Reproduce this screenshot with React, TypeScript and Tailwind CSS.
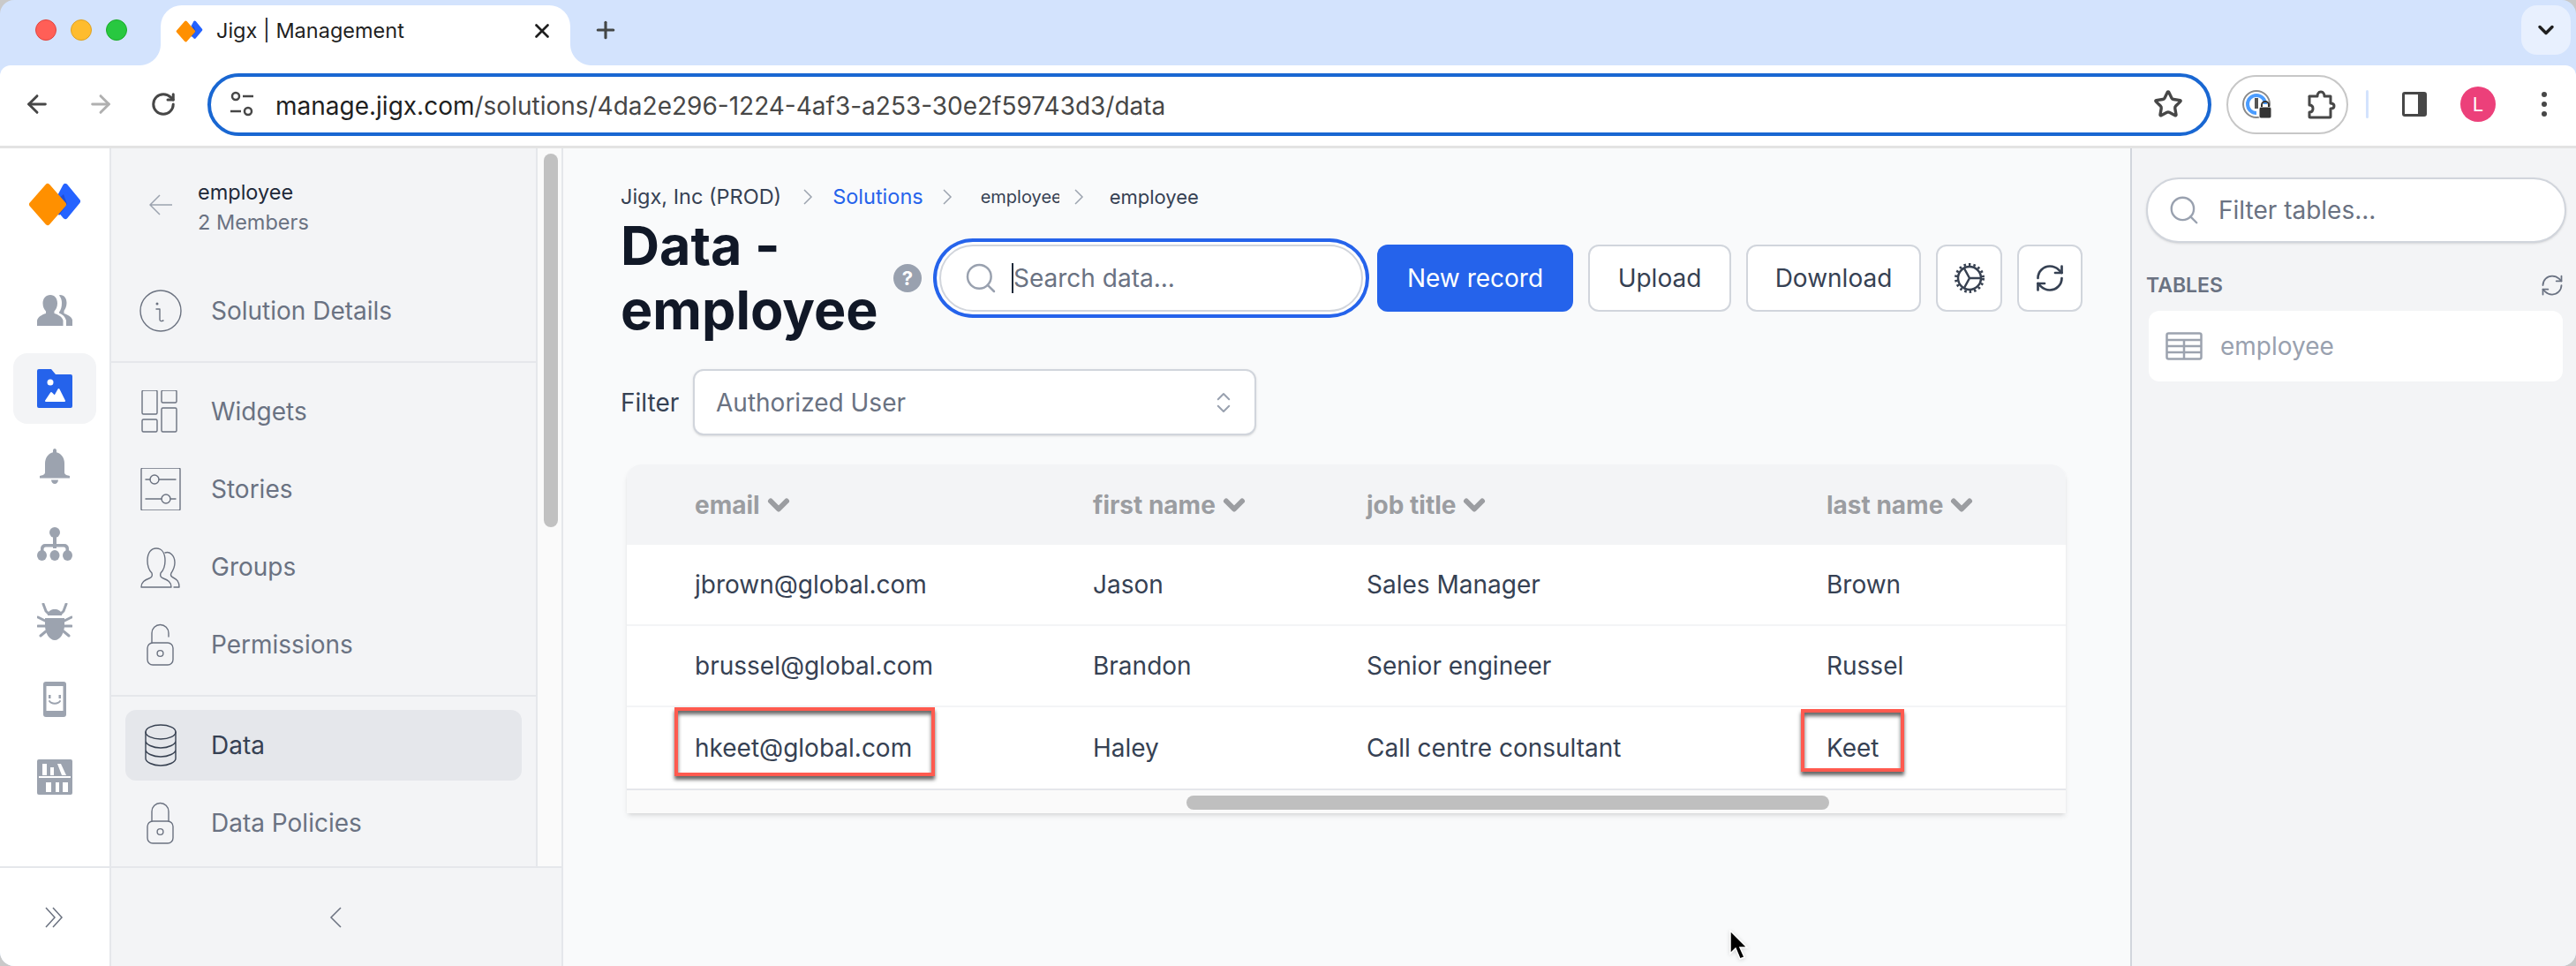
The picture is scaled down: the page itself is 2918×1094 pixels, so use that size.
import React from 'react';
import { ArrowLeft, ArrowRight, RotateCw, Star, Plus, X, ChevronDown, Search, RefreshCw, ChevronsUpDown } from 'lucide-react';

const NavIcon: React.FC<{ children: React.ReactNode; dark?: boolean }> = ({ children, dark }) => (
    <svg width="48" height="48" viewBox="0 0 48 48" fill="none" stroke={dark ? '#374151' : '#6b7280'} strokeWidth="1.4" strokeLinecap="round" strokeLinejoin="round">
        {children}
    </svg>
);

const lockOpen = (
    <>
        <rect x="9" y="22" width="29" height="25" rx="6" />
        <circle cx="23.5" cy="34" r="3.4" />
        <path d="M14 22V11a9.5 9.5 0 0 1 19 0v4" />
    </>
);
const lockClosed = (
    <>
        <rect x="9" y="22" width="29" height="25" rx="6" />
        <circle cx="23.5" cy="34" r="3.4" />
        <path d="M14 22V11a9.5 9.5 0 0 1 19 0v11" />
    </>
);

const railIcons = [
    <svg key="people" width="40" height="36" viewBox="0 0 40 36" fill="#9ca3af">
        <path d="M15 0c5 0 8 4 8 9.500 0 4-1.500 7-3.500 9v2.500c5 1.500 9 4 10 8V35H0v-6c1-4 5-6.500 10-8v-2.500C8 16.500 6.500 13.500 6.500 9.500 6.500 4 10 0 15 0z" />
        <path d="M26 0c5 0 7.500 4 7.500 9 0 4-1.500 7-3 9v3c4 1.500 8.500 3.500 9.500 7.500V35h-7v-6c-1-4-4-7-8-8.500v-1c2-2.500 3-6 3-10.500 0-3-1-6-3-8.500C25 .200 25.500 0 26 0z" />
    </svg>,
    <svg key="folder" width="40" height="44" viewBox="0 0 40 44" fill="#2563eb">
        <path d="M2 0h14l5 6h17a2 2 0 0 1 2 2v34a2 2 0 0 1-2 2H2a2 2 0 0 1-2-2V2a2 2 0 0 1 2-2z" />
        <circle cx="15" cy="15" r="3.500" fill="#fff" />
        <path d="M10 36l6-9 4 4 4.500-8 6.500 13z" fill="#fff" stroke="#fff" strokeWidth="2" strokeLinejoin="round" />
    </svg>,
    <svg key="bell" width="34" height="40" viewBox="0 0 34 40" fill="#9ca3af">
        <path d="M17 0c1.200 0 2 1 2 2.500v1.800C25 6 28 11 28 17v10c0 1.500 1 3 6 4v2.500H0V31c5-1 6-2.500 6-4V17c0-6 3-11 9-12.700V2.500C15 1 15.800 0 17 0z" />
        <path d="M13 35.500h8c0 2.500-2 4.500-4 4.500s-4-2-4-4.500z" />
    </svg>,
    <svg key="tree" width="40" height="38" viewBox="0 0 40 38" fill="#9ca3af">
        <circle cx="20" cy="6" r="6" />
        <rect x="18" y="10" width="4" height="14" />
        <path d="M4 30v-6a5 5 0 0 1 5-5h22a5 5 0 0 1 5 5v6h-3.500v-5a2.500 2.500 0 0 0-2.500-2.500H10A2.500 2.500 0 0 0 7.500 25v5z" />
        <ellipse cx="5.500" cy="32" rx="5.500" ry="6" />
        <ellipse cx="20" cy="32" rx="5.500" ry="6" />
        <ellipse cx="34.500" cy="32" rx="5.500" ry="6" />
    </svg>,
    <svg key="bug" width="40" height="42" viewBox="0 0 40 42" fill="#9ca3af">
        <path d="M12 12c1-3 4-5 8-5s7 2 8 5v2H12z" />
        <path d="M9 17h22v8c0 9-5 17-11 17S9 34 9 25z" />
        <path d="M7 1l3 8 3 3M33 1l-3 8-3 3M1 16l8 4M39 16l-8 4M1 26h8M39 26h-8M4 37l6-5M36 37l-6-5" fill="none" stroke="#9ca3af" strokeWidth="3" strokeLinecap="round" />
    </svg>,
    <svg key="phone" width="26" height="40" viewBox="0 0 26 40" fill="#9ca3af">
        <rect width="26" height="40" rx="3" />
        <rect x="3.500" y="5" width="19" height="28" fill="#fff" />
        <rect x="6" y="15" width="2.500" height="4" />
        <rect x="17.500" y="15" width="2.500" height="4" />
        <path d="M7 22c2 3.500 10 3.500 12 0" fill="none" stroke="#9ca3af" strokeWidth="2" strokeLinecap="round" />
    </svg>,
    <svg key="library" width="40" height="40" viewBox="0 0 40 40" fill="#9ca3af">
        <rect width="40" height="40" rx="2" />
        <g fill="#fff">
            <rect x="6" y="5" width="5" height="13" />
            <rect x="15" y="9" width="4" height="9" />
            <path d="M23 5h4l6 13h-5z" />
            <rect x="2" y="19" width="36" height="2" />
            <rect x="10" y="26" width="6" height="11" />
            <rect x="21" y="26" width="4" height="11" />
            <rect x="29" y="26" width="6" height="11" />
        </g>
    </svg>,
];

const LogoMark: React.FC<{ w: number; h: number }> = ({ w, h }) => (
    <svg width={w} height={h} viewBox="0 0 58 49">
        <path d="M41 4L55 21 41 38 30 25z" fill="#2563ff" stroke="#2563ff" strokeWidth="6" strokeLinejoin="round" />
        <path d="M39 13l4 11-9 13-8-13z" fill="#1d4ed8" />
        <path d="M21 4L39 24.500 21 45 3 24.500z" fill="#ff9000" stroke="#ff9000" strokeWidth="6" strokeLinejoin="round" />
    </svg>
);

const NavRow: React.FC<{ label: string; icon: React.ReactNode; active?: boolean }> = ({ label, icon, active }) => (
    <div className={`flex h-20 items-center rounded-xl pl-4 ${active ? 'bg-gray-200 text-gray-700' : 'text-gray-500'}`}>
        <span className="flex w-12 shrink-0 justify-center">{icon}</span>
        <span className="ml-[33px] text-[28px]">{label}</span>
    </div>
);

const Crumb = () => (
    <svg width="12" height="20" viewBox="0 0 12 20" fill="none" stroke="#9ca3af" strokeWidth="1.500" className="shrink-0"><path d="M2 2l8 8-8 8" /></svg>
);

const rows = [
    ['jbrown@global.com', 'Jason', 'Sales Manager', 'Brown'],
    ['brussel@global.com', 'Brandon', 'Senior engineer', 'Russel'],
    ['hkeet@global.com', 'Haley', 'Call centre consultant', 'Keet'],
];

const markShadow = 'shadow-[0_4px_4px_rgba(0,0,0,0.6),inset_0_4px_4px_rgba(0,0,0,0.6)]';

export default function App() {
    return (
        <div className="h-[1094px] w-[2918px] overflow-hidden bg-[#c9c9c9] font-[family-name:Inter,sans-serif]">
            <div className="flex h-full flex-col overflow-hidden rounded-[16px] bg-[#d3e3fd]">
                {/* tab strip */}
                <div className="flex h-[74px] shrink-0 items-start">
                    <div className="ml-10 mt-[22px] flex gap-4">
                        <span className="h-6 w-6 rounded-full border border-[#e0443e] bg-[#ff5f57]" />
                        <span className="h-6 w-6 rounded-full border border-[#dea123] bg-[#febc2e]" />
                        <span className="h-6 w-6 rounded-full border border-[#1aab29] bg-[#28c840]" />
                    </div>
                    <div className="relative ml-[38px] mt-1.5 flex h-[68px] w-[464px] items-center rounded-t-[24px] bg-white pb-2.5 pl-[17px]">
                        <span className="absolute -left-6 bottom-0 h-6 w-6 bg-[radial-gradient(circle_at_0_0,transparent_23.500px,white_24.500px)]" />
                        <span className="absolute -right-6 bottom-0 h-6 w-6 bg-[radial-gradient(circle_at_100%_0,transparent_23.500px,white_24.500px)]" />
                        <LogoMark w={31} h={25} />
                        <span className="ml-[15px] text-[23.500px] text-[#1f1f1f]">Jigx | Management</span>
                        <X size={26} strokeWidth={2.500} className="ml-auto mr-[19px] text-[#1f1f1f]" />
                    </div>
                    <Plus size={30} strokeWidth={2.500} className="ml-[25px] mt-[19px] text-[#444746]" />
                    <div className="ml-auto mr-1.5 mt-1.5 flex h-14 w-14 items-center justify-center rounded-[18px] bg-[#e8f0fe]">
                        <ChevronDown size={28} strokeWidth={3} className="text-[#1f1f1f]" />
                    </div>
                </div>

                {/* toolbar */}
                <div className="flex h-[94px] shrink-0 items-center rounded-t-[12px] border-b-[3px] border-[#e3e3e3] bg-white pb-[3px]">
                    <ArrowLeft size={32} strokeWidth={2.200} className="ml-[26px] text-[#474747]" />
                    <ArrowRight size={32} strokeWidth={2.200} className="ml-10 text-[#b0b0b0]" />
                    <RotateCw size={30} strokeWidth={2.400} className="ml-10 text-[#474747]" />
                    <div className="ml-[35px] flex h-[71px] w-[2270px] items-center rounded-full border-4 border-[#1967d2] pl-[22px]">
                        <svg width="26" height="30" viewBox="0 0 26 30" fill="none" stroke="#474747" strokeWidth="2.500">
                            <circle cx="6" cy="6" r="4" />
                            <path d="M14 6h12M0 23h12" />
                            <circle cx="20" cy="23" r="4" />
                        </svg>
                        <span className="ml-[25px] pt-1 text-[28px] text-[#1f1f1f]">manage.jigx.com<span className="text-[#474747]">/solutions/4da2e296-1224-4af3-a253-30e2f59743d3/data</span></span>
                        <Star size={34} strokeWidth={2.400} className="ml-auto mr-[28px] text-[#474747]" />
                    </div>
                    <div className="ml-[17px] flex h-[67px] w-[138px] items-center rounded-full border-2 border-[#c7c7c7] pl-[16px]">
                        <svg width="34" height="32" viewBox="0 0 34 32" fill="none">
                            <circle cx="16" cy="16" r="15" stroke="#8a8a8a" strokeWidth="2" />
                            <path d="M6 16a10 10 0 0 1 20 0M16 26a10 10 0 0 1-10-10" stroke="#4a9cff" strokeWidth="4" />
                            <rect x="14" y="9" width="4" height="12" fill="#555" />
                            <rect x="19" y="19" width="14" height="13" rx="2" fill="#333" stroke="#fff" />
                            <path d="M22 19v-2a4 4 0 0 1 8 0v2" stroke="#333" strokeWidth="2" />
                        </svg>
                        <svg width="34" height="34" viewBox="0 0 34 34" fill="none" stroke="#474747" strokeWidth="3" strokeLinejoin="round" className="ml-[39px]">
                            <path d="M3 8h9c0-2 1-5 4-5s4 3 4 5h7v8c2 0 4 .5 4 3s-2 3-4 3v9a1 1 0 0 1-1 1H4a1 1 0 0 1-1-1v-5c3 0 4-2 4-4s-1-4-4-4V9a1 1 0 0 1 0-1z" />
                        </svg>
                    </div>
                    <span className="ml-5 h-8 w-[3px] rounded bg-[#d3e3fd]" />
                    <div className="ml-[38px] flex h-7 w-7 overflow-hidden rounded-[3px] border-[3px] border-[#474747]">
                        <span className="w-[15px] bg-white" />
                        <span className="flex-1 bg-[#474747]" />
                    </div>
                    <span className="ml-[38px] flex h-10 w-10 items-center justify-center rounded-full bg-[#ec407a] text-[22px] text-white">L</span>
                    <span className="ml-[52px] flex flex-col gap-[5px]">
                        <span className="h-1.5 w-1.5 rounded-full bg-[#474747]" />
                        <span className="h-1.5 w-1.5 rounded-full bg-[#474747]" />
                        <span className="h-1.5 w-1.5 rounded-full bg-[#474747]" />
                    </span>
                </div>

                {/* app */}
                <div className="flex min-h-0 flex-1">
                    {/* icon rail */}
                    <div className="flex w-[126px] shrink-0 flex-col border-r-2 border-gray-200 bg-white">
                        <div className="flex h-[813px] flex-col items-center pt-[39px]">
                            <LogoMark w={58} h={49} />
                            <div className="mt-14 flex flex-col gap-2">
                                {railIcons.map((icon, i) => (
                                    <div key={i} className={`flex h-20 w-[94px] items-center justify-center rounded-2xl ${i === 1 ? 'bg-gray-100' : ''}`}>{icon}</div>
                                ))}
                            </div>
                        </div>
                        <div className="flex flex-1 items-center justify-center border-t-2 border-gray-200">
                            <svg width="22" height="24" viewBox="0 0 22 24" fill="none" stroke="#6b7280" strokeWidth="1.500"><path d="M1 1l10 11L1 23M9 1l10 11L9 23" /></svg>
                        </div>
                    </div>

                    {/* solution nav */}
                    <div className="flex w-[512px] shrink-0 flex-col border-r-2 border-gray-200 bg-gray-100">
                        <div className="flex h-[813px]">
                            <div className="w-[483px] shrink-0 overflow-hidden border-r-2 border-gray-200">
                                <div className="flex pl-[43px] pt-[33px]">
                                    <svg width="26" height="24" viewBox="0 0 26 24" fill="none" stroke="#9ca3af" strokeWidth="1.500" className="mt-[19px]"><path d="M12 1L1 12l11 11M1 12h25" /></svg>
                                    <div className="ml-[29px]">
                                        <p className="text-[23.500px] leading-[34px] text-gray-800">employee</p>
                                        <p className="text-[23.500px] leading-[34px] text-gray-500">2 Members</p>
                                    </div>
                                </div>
                                <div className="border-b-2 border-gray-200 px-4 pb-[17px] pt-[43px]">
                                    <NavRow label="Solution Details" icon={<NavIcon><circle cx="24" cy="24" r="23" /><circle cx="20" cy="16" r="0.800" /><path d="M19 22h4v12c0 2 2 2 4 1" /></NavIcon>} />
                                </div>
                                <div className="flex flex-col gap-2 border-b-2 border-gray-200 px-4 pb-[17px] pt-[15px]">
                                    <NavRow label="Widgets" icon={<NavIcon><rect x="3" y="0" width="17" height="27" rx="1.500" /><rect x="25" y="0" width="17" height="14" rx="1.500" /><rect x="3" y="33" width="17" height="14" rx="1.500" /><rect x="25" y="20" width="17" height="27" rx="1.500" /></NavIcon>} />
                                    <NavRow label="Stories" icon={<NavIcon><rect x="2" y="0" width="44" height="48" rx="1.500" /><circle cx="17" cy="13" r="5" /><circle cx="30" cy="35" r="5" /><path d="M7 13h5M22 13h19M7 35h18M35 35h6" /></NavIcon>} />
                                    <NavRow label="Groups" icon={<NavIcon><path d="M2 47c0-6 4-8 9-10 3-1 4-3 3-6-3-3-5-7-5-14C9 8 13 3 19 3s10 5 10 14c0 7-2 11-5 14-1 3 0 5 3 6 5 2 9 4 9 10z" /><path d="M29 8c5-2 11 3 11 11 0 6-2 9-4 12-1 2 0 4 2 5 4 2 7 4 7 11h-6" /></NavIcon>} />
                                    <NavRow label="Permissions" icon={<NavIcon>{lockOpen}</NavIcon>} />
                                </div>
                                <div className="flex flex-col gap-2 px-4 pt-[15px]">
                                    <NavRow active label="Data" icon={<NavIcon dark><ellipse cx="24" cy="9" rx="17" ry="8" /><path d="M7 9v30c0 4 8 8 17 8s17-4 17-8V9M7 19c0 4 8 8 17 8s17-4 17-8M7 29c0 4 8 8 17 8s17-4 17-8" /></NavIcon>} />
                                    <NavRow label="Data Policies" icon={<NavIcon>{lockClosed}</NavIcon>} />
                                </div>
                            </div>
                            <div className="flex-1 bg-[#fafafa] pl-[7px] pt-1.5">
                                <div className="h-[423px] w-4 rounded-full bg-[#c1c1c1]" />
                            </div>
                        </div>
                        <div className="flex flex-1 items-center border-t-2 border-gray-200 pl-[247px]">
                            <svg width="14" height="24" viewBox="0 0 14 24" fill="none" stroke="#6b7280" strokeWidth="1.500"><path d="M13 1L2 12l11 11" /></svg>
                        </div>
                    </div>

                    {/* main */}
                    <div className="relative min-w-0 flex-1 bg-gray-50 pl-[65px] pt-[38px]">
                        <div className="flex h-[34px] items-center text-[23.500px] text-gray-700">
                            <span>Jigx, Inc (PROD)</span>
                            <span className="ml-6"><Crumb /></span>
                            <span className="ml-[22px] text-[#2563eb]">Solutions</span>
                            <span className="ml-[21px]"><Crumb /></span>
                            <span className="ml-[32px] w-[89px] overflow-hidden text-[20px]">employee</span>
                            <span className="ml-[16px]"><Crumb /></span>
                            <span className="ml-[29px] text-[22px]">employee</span>
                        </div>

                        <div className="flex h-[150px] items-center">
                            <h1 className="w-[309px] text-[61px] font-bold leading-[73px] text-[#111827]">Data - employee</h1>
                            <span className="flex h-8 w-8 items-center justify-center rounded-full bg-gray-400 text-[22px] font-bold text-white">?</span>
                            <div className="ml-5 flex h-[76px] w-[480px] items-center rounded-full border-2 border-gray-300 bg-white pl-[25px] ring-4 ring-[#2563eb] ring-offset-[3px] ring-offset-white">
                                <Search size={40} strokeWidth={1.500} className="text-gray-400" />
                                <span className="ml-[15px] h-[34px] w-0.5 bg-gray-800" />
                                <span className="text-[28px] text-gray-500">Search data...</span>
                            </div>
                            <div className="ml-4 flex items-center gap-[17px] text-[28px] text-gray-700">
                                <button className="h-[76px] w-[222px] rounded-xl bg-[#2563eb] text-white">New record</button>
                                <button className="h-[76px] w-[162px] rounded-xl border-2 border-gray-300 bg-white">Upload</button>
                                <button className="h-[76px] w-[198px] rounded-xl border-2 border-gray-300 bg-white">Download</button>
                                <button className="flex h-[76px] w-[75px] items-center justify-center rounded-xl border-2 border-gray-300 bg-white">
                                    <svg width="34" height="34" viewBox="0 0 34 34" fill="none" stroke="#374151">
                                        <circle cx="17" cy="17" r="13" strokeWidth="2.500" />
                                        <circle cx="17" cy="17" r="15.500" strokeWidth="3" strokeDasharray="2.500 3" />
                                        <path d="M17 17L11 6M17 17L11 28M17 17h13" strokeWidth="2.500" />
                                    </svg>
                                </button>
                                <button className="flex h-[76px] w-[74px] items-center justify-center rounded-xl border-2 border-gray-300 bg-white">
                                    <RefreshCw size={36} strokeWidth={1.800} className="text-gray-700" />
                                </button>
                            </div>
                        </div>

                        <div className="mt-7 flex items-center">
                            <span className="w-[82px] text-[28px] text-gray-700">Filter</span>
                            <div className="flex h-[75px] w-[638px] items-center rounded-xl border-2 border-gray-300 bg-white pl-6 pr-5 text-[28px] text-gray-500 shadow-sm">
                                <span>Authorized User</span>
                                <ChevronsUpDown size={30} strokeWidth={1.600} className="ml-auto text-gray-400" />
                            </div>
                        </div>

                        <div className="ml-[7px] mt-[33px] w-[1630px] overflow-hidden rounded-t-2xl bg-white shadow-md">
                            <div className="grid h-[91px] grid-cols-[451px_310px_521px_1fr] items-center bg-gray-100 pl-[77px] text-[28px] font-bold text-[#9b9da1]">
                                {['email', 'first name', 'job title', 'last name'].map(h => (
                                    <span key={h} className="flex items-center gap-[3px]">{h}<ChevronDown size={36} strokeWidth={4} /></span>
                                ))}
                            </div>
                            {rows.map((r, i) => (
                                <div key={r[0]} className={`grid h-[92px] grid-cols-[451px_310px_521px_1fr] items-center pl-[77px] text-[28px] text-gray-700 ${i < 2 ? 'border-b-2 border-gray-100' : ''}`}>
                                    {r.map((c, j) => (
                                        <span key={c} className="relative">
                                            {c}
                                            {i === 2 && j === 0 && <span className={`absolute -left-[23px] -top-[25px] h-[78px] w-[295px] border-4 border-[#ff5a4f] ${markShadow}`} />}
                                            {i === 2 && j === 3 && <span className={`absolute -left-[29px] -top-[23px] h-[71px] w-[117px] border-4 border-[#ff5a4f] ${markShadow}`} />}
                                        </span>
                                    ))}
                                </div>
                            ))}
                            <div className="h-[28px] border-t-2 border-gray-200 bg-[#fafafa] pl-[634px] pt-1.5">
                                <div className="h-4 w-[728px] rounded-full bg-[#bfbfbf]" />
                            </div>
                        </div>

                        <svg width="24" height="36" viewBox="0 0 24 36" className="absolute left-[1320px] top-[885px] drop-shadow-sm">
                            <path d="M2 1v26l6-6 5 12 5-2-5-11h8z" fill="#000" stroke="#fff" strokeWidth="1.500" />
                        </svg>
                    </div>

                    {/* tables panel */}
                    <div className="w-[505px] shrink-0 border-l-2 border-gray-300 bg-gray-100 pl-4 pr-[11px] pt-[33px]">
                        <div className="flex h-[74px] items-center rounded-full border-2 border-gray-300 bg-white pl-[22px] shadow-sm">
                            <Search size={38} strokeWidth={1.500} className="text-gray-400" />
                            <span className="ml-5 text-[28px] text-gray-500">Filter tables...</span>
                        </div>
                        <div className="mt-[29px] flex h-[38px] items-center justify-between pr-[2px]">
                            <span className="text-[23px] font-semibold text-gray-500">TABLES</span>
                            <RefreshCw size={28} strokeWidth={1.500} className="text-gray-500" />
                        </div>
                        <div className="ml-[3px] mr-1 mt-[10px] flex h-20 items-center rounded-xl bg-white pl-[19px] text-[28px] text-gray-400">
                            <svg width="42" height="32" viewBox="0 0 42 32" fill="none" stroke="#9ca3af" strokeWidth="2.500">
                                <rect x="1.500" y="1.500" width="39" height="29" rx="2" />
                                <path d="M1 9h40M1 16h40M1 23h40M21 9v22" />
                            </svg>
                            <span className="ml-5">employee</span>
                        </div>
                    </div>
                </div>
            </div>
        </div>
    );
}
